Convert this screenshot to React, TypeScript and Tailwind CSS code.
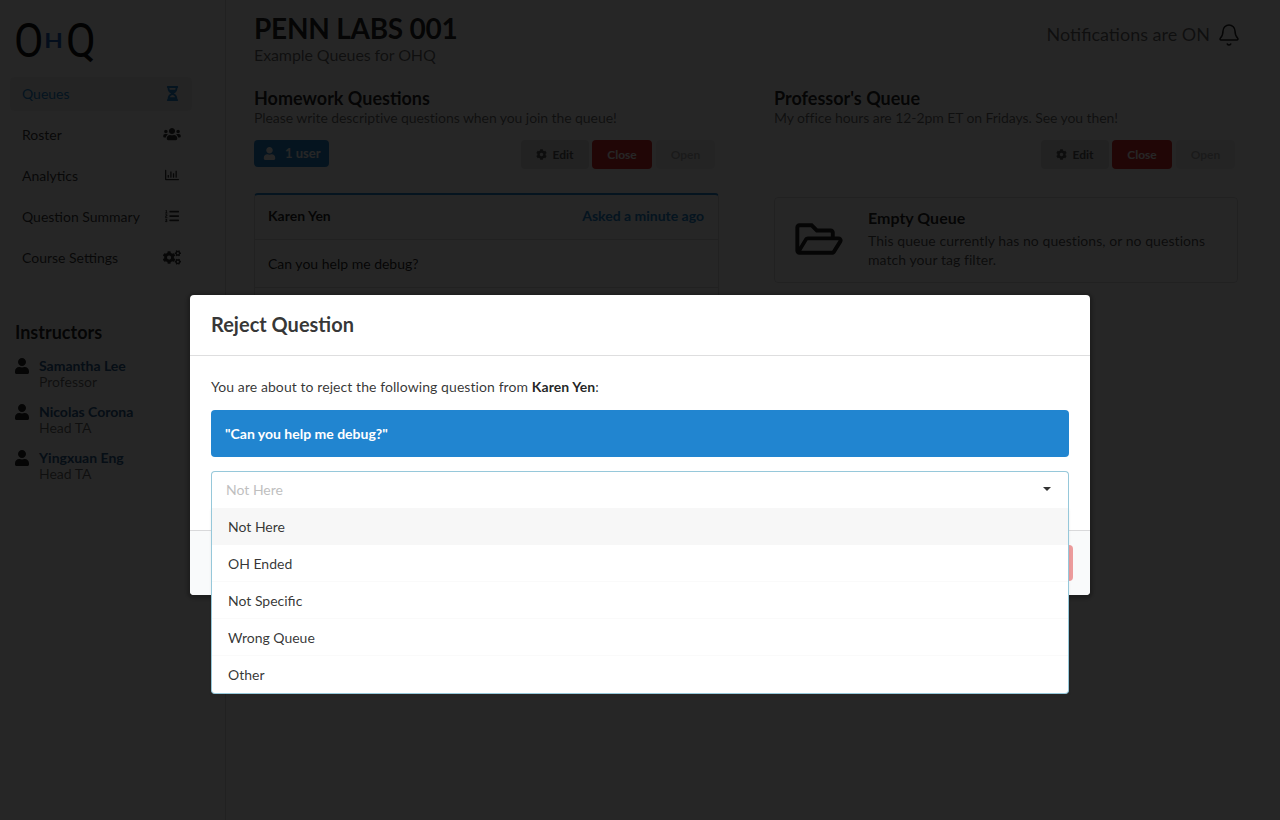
import { FaUser, FaUsers, FaRegChartBar, FaListOl, FaCogs, FaCog, FaRegFolderOpen, FaHourglassHalf } from 'react-icons/fa';
import { Bell } from 'lucide-react';
import type { ReactNode } from 'react';

const navItems: { label: string; icon: ReactNode; active?: boolean }[] = [
  { label: 'Queues', icon: <FaHourglassHalf className="w-[15px] h-[15px]" />, active: true },
  { label: 'Roster', icon: <FaUsers className="w-[18px] h-[14px]" /> },
  { label: 'Analytics', icon: <FaRegChartBar className="w-[14px] h-[14px]" /> },
  { label: 'Question Summary', icon: <FaListOl className="w-[14px] h-[14px]" /> },
  { label: 'Course Settings', icon: <FaCogs className="w-[18px] h-[15px]" /> },
];

const instructors = [
  { name: 'Samantha Lee', role: 'Professor' },
  { name: 'Nicolas Corona', role: 'Head TA' },
  { name: 'Yingxuan Eng', role: 'Head TA' },
];

const reasons = ['Not Here', 'OH Ended', 'Not Specific', 'Wrong Queue', 'Other'];

function QueueButtons() {
  return (
    <div className="flex text-[12px] font-bold">
      <button className="h-[29px] w-[68px] mr-[3px] rounded bg-[#e0e1e2] text-[#5a5a5a] flex items-center justify-center gap-[5px]">
        <FaCog className="w-[11px] h-[11px]" />
        Edit
      </button>
      <button className="h-[29px] w-[60px] mr-1 rounded bg-[#db2828] text-white">Close</button>
      <button className="h-[29px] w-[59px] rounded bg-[#e0e1e2]/45 text-[#5a5a5a]/45">Open</button>
    </div>
  );
}

function Logo() {
  return (
    <div className="h-[77px] pl-[4px] pt-[13px] flex items-start text-[#111] font-['Roboto',sans-serif]">
      <span className="inline-block w-[27px] origin-left text-[48px] leading-[56px] scale-x-[0.89]">O</span>
      <span className="ml-[2px] inline-block w-[21px] text-center text-[21px] leading-[56px] font-medium text-[#1f5fb8] scale-x-[1.25]">H</span>
      <span className="ml-[2px] inline-block w-[27px] origin-left text-[48px] leading-[56px] scale-x-[0.9]">Q</span>
    </div>
  );
}

function Sidebar() {
  return (
    <aside className="w-[226px] shrink-0 border-r border-[#22242626] pl-[10px] pr-[33px]">
      <Logo />
      <nav className="flex flex-col gap-[7px]">
        {navItems.map((item) => (
          <div
            key={item.label}
            className={`h-[34px] pb-[2px] rounded pl-3 pr-[11px] flex items-center justify-between text-[14px] ${
              item.active ? 'bg-[#0000000d] text-[#2185d0]' : 'text-[#000000cc]'
            }`}
          >
            {item.label}
            <span className="w-[18px] flex justify-center">{item.icon}</span>
          </div>
        ))}
      </nav>
      <h3 className="mt-[45px] pl-[5px] text-[18px] leading-[24px] font-bold text-[#000000de]">Instructors</h3>
      <div className="mt-[14px] pl-[4px] flex flex-col gap-[14px]">
        {instructors.map((person) => (
          <div key={person.name} className="flex text-[14px] leading-4">
            <FaUser className="w-4 h-4 text-[#000000de]" />
            <div className="ml-[9px]">
              <div className="font-bold text-[#2b5c8f]">{person.name}</div>
              <div className="text-[#0009]">{person.role}</div>
            </div>
          </div>
        ))}
      </div>
    </aside>
  );
}

function Main() {
  return (
    <main className="flex-1 pl-7 pr-[41px]">
      <div className="flex justify-between h-[85px] pt-[11px]">
        <div>
          <h1 className="text-[28px] leading-[34px] font-bold tracking-[-0.25px] text-[#000000de]">PENN LABS 001</h1>
          <p className="text-[16px] leading-[20px] tracking-[-0.1px] text-[#0009]">Example Queues for OHQ</p>
        </div>
        <div className="flex items-start pt-[10px] text-[#0009]">
          <span className="text-[18px] leading-[26px]">Notifications are ON</span>
          <Bell className="w-6 h-6 ml-[7px] mt-[2px] -mr-[2px] text-[#000000de]" strokeWidth={1.5} />
        </div>
      </div>
      <div className="grid grid-cols-[465px_464px] gap-[55px]">
        <section>
          <h3 className="text-[18px] leading-[24px] font-bold text-[#000000de] pt-px">Homework Questions</h3>
          <p className="mt-px text-[14px] leading-[14px] tracking-[-0.07px] text-[#0009]">Please write descriptive questions when you join the queue!</p>
          <div className="mt-[15px] flex items-start justify-between pr-[4px]">
            <div className="h-[27px] w-[75px] rounded bg-[#2185d0] text-white text-[13px] font-bold flex items-center pl-[9px] gap-[9px]">
              <FaUser className="w-[13px] h-[13px]" />
              1 user
            </div>
            <QueueButtons />
          </div>
          <div className="mt-[24px] rounded border border-[#22242626] border-t-2 border-t-[#2185d0] text-[14px]">
            <div className="h-[45px] pb-1 pl-[13px] pr-[14px] flex items-center justify-between border-b border-[#22242626]">
              <span className="font-bold text-[#000000de]">Karen Yen</span>
              <span className="font-bold text-[#2185d0]">Asked a minute ago</span>
            </div>
            <div className="h-12 px-[13px] flex items-center border-b border-[#22242626] text-[#000000de]">Can you help me debug?</div>
            <div className="h-12" />
          </div>
        </section>
        <section>
          <h3 className="text-[18px] leading-[24px] font-bold text-[#000000de] pt-px">Professor's Queue</h3>
          <p className="mt-px text-[14px] leading-[14px] tracking-[-0.08px] text-[#0009]">My office hours are 12-2pm ET on Fridays. See you then!</p>
          <div className="mt-[15px] flex justify-end pr-[3px]">
            <QueueButtons />
          </div>
          <div className="mt-[28px] h-[86px] rounded border border-[#22242626] flex items-center pl-[20px] pr-4">
            <FaRegFolderOpen className="w-[48px] h-[42px] -mt-[2px] shrink-0 text-[#000000de]" />
            <div className="ml-[25px] pb-[2px] text-[14px] leading-[19px] tracking-[0.06px] text-[#000000b3]">
              <div className="mb-1 text-[16px] leading-[18px] tracking-normal font-bold text-[#000000de]">Empty Queue</div>
              This queue currently has no questions, or no questions match your tag filter.
            </div>
          </div>
        </section>
      </div>
    </main>
  );
}

function RejectModal() {
  return (
    <div className="absolute inset-0 bg-[#000000d9] flex justify-center items-start pt-[295px]">
      <div className="w-[900px] h-[300px] bg-white rounded flex flex-col shadow-[0_1px_3px_3px_rgba(0,0,0,0.2)]">
        <div className="h-[61px] pb-[2px] px-[21px] flex items-center border-b border-[#22242626] text-[20px] font-bold text-[#000000cc]">
          Reject Question
        </div>
        <div className="h-[174px] px-[21px] pt-[21px] text-[14px] text-[#000000cc]">
          <p className="leading-5 tracking-[0.08px]">
            You are about to reject the following question from <b className="text-[#000000de]">Karen Yen</b>:
          </p>
          <div className="mt-[13px] h-[47px] rounded bg-[#2185d0] text-white font-bold flex items-center px-[14px]">
            "Can you help me debug?"
          </div>
          <div className="relative mt-[14px]">
            <div className="h-[37px] pb-[2px] rounded-t border border-[#96c8da] border-b-0 bg-white pl-[14px] pr-[17px] flex items-center justify-between text-[#bfbfbf]">
              Not Here
              <span className="border-x-[4px] border-x-transparent border-t-[4px] border-t-[#333]" />
            </div>
            <div className="absolute left-0 right-0 top-[37px] z-10 bg-white border border-t-0 border-[#96c8da] rounded-b shadow-[0_2px_3px_rgba(34,36,38,0.08)]">
              {reasons.map((reason, i) => (
                <div
                  key={reason}
                  className={`h-[37px] pl-4 flex items-center ${i === 0 ? 'bg-[#f7f7f7]' : ''} ${
                    i > 0 && i < 4 ? 'border-b border-[#fafafa]' : ''
                  }`}
                >
                  {reason}
                </div>
              ))}
            </div>
          </div>
        </div>
        <div className="flex-1 rounded-b bg-[#f9fafb] border-t border-[#22242626] pr-[17px] pt-[14px] flex justify-end gap-1 text-[14px] font-bold">
          <button className="h-9 px-5 rounded bg-[#e0e1e2] text-[#0009]">Cancel</button>
          <button className="h-9 px-5 rounded bg-[#db2828]/45 text-white">Reject</button>
        </div>
      </div>
    </div>
  );
}

export default function App() {
  return (
    <div className="relative h-[820px] overflow-hidden bg-white flex font-['Lato','Liberation_Sans',sans-serif]">
      <Sidebar />
      <Main />
      <RejectModal />
    </div>
  );
}
